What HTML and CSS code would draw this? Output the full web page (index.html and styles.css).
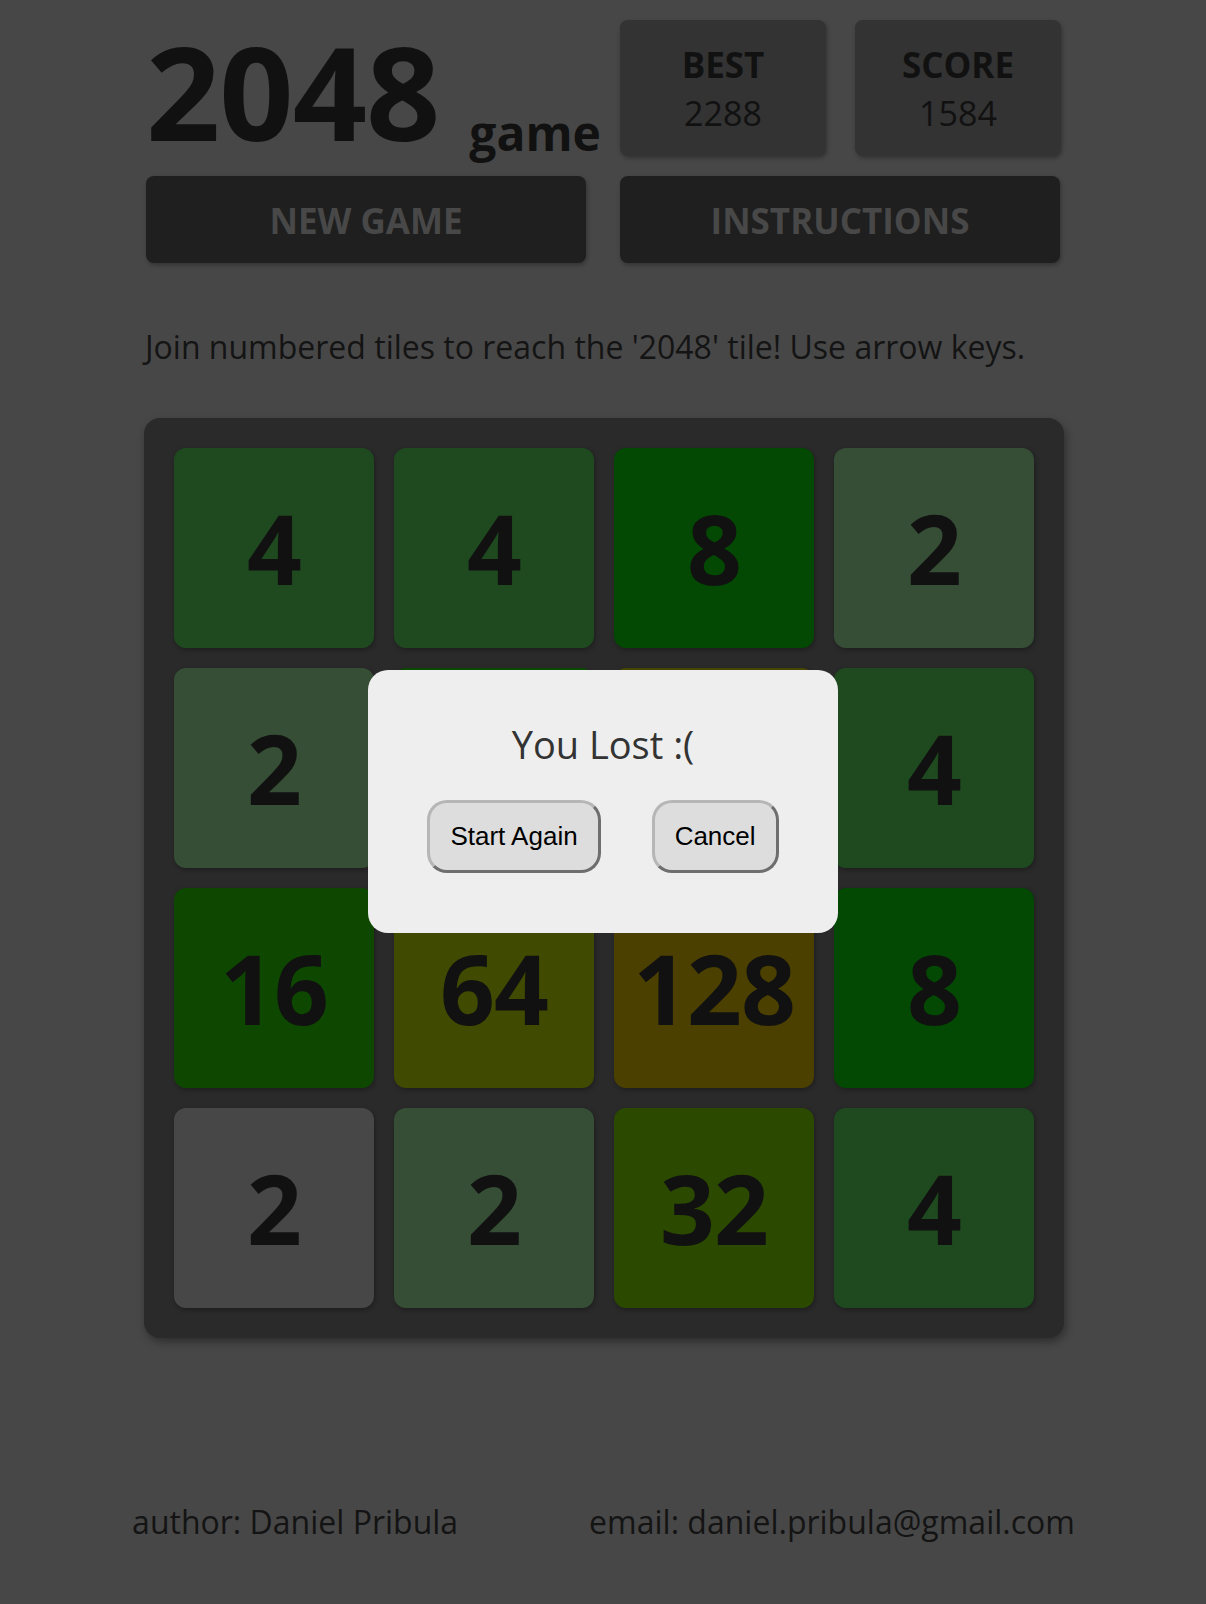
FILE: index.html
```html
<!DOCTYPE html>
<html lang="en">
<head>
<meta charset="utf-8">
<title>2048 game</title>
<link rel="stylesheet" href="styles.css">
</head>
<body>
<div class="page">
  <header class="header">
    <div class="title-row">
      <h1 class="title"><span class="title-main">2048</span><span class="title-sub">game</span></h1>
      <div class="scores">
        <div class="score-box"><div class="score-label">BEST</div><div class="score-value">2288</div></div>
        <div class="score-box"><div class="score-label">SCORE</div><div class="score-value">1584</div></div>
      </div>
    </div>
    <div class="actions">
      <button class="action">NEW GAME</button>
      <button class="action">INSTRUCTIONS</button>
    </div>
  </header>

  <p class="intro">Join numbered tiles to reach the '2048' tile! Use arrow keys.</p>

  <div class="board">
    <div class="tile t4">4</div>
    <div class="tile t4">4</div>
    <div class="tile t8">8</div>
    <div class="tile t2">2</div>

    <div class="tile t2">2</div>
    <div class="tile t8b"></div>
    <div class="tile t256"></div>
    <div class="tile t4">4</div>

    <div class="tile t16">16</div>
    <div class="tile t64">64</div>
    <div class="tile t128">128</div>
    <div class="tile t8">8</div>

    <div class="tile tnew">2</div>
    <div class="tile t2">2</div>
    <div class="tile t32">32</div>
    <div class="tile t4">4</div>
  </div>

  <footer class="footer">
    <span>author: Daniel Pribula</span>
    <span>email: daniel.pribula@gmail.com</span>
  </footer>
</div>

<div class="modal">
  <div class="modal-title">You Lost :(</div>
  <div class="modal-buttons">
    <button class="modal-btn">Start Again</button>
    <button class="modal-btn">Cancel</button>
  </div>
</div>
</body>
</html>
```

FILE: styles.css
```css
html, body {
  margin: 0;
  padding: 0;
}
body {
  background: #474747;
  font-family: "Open Sans", "DejaVu Sans", sans-serif;
  color: #141414;
  min-height: 1604px;
}
.page {
  width: 920px;
  margin: 0 auto;
}
.header {
  padding: 20px 2px 0 3px;
}
.title-row {
  display: flex;
  gap: 34px;
  align-items: flex-end;
}
.title {
  margin: 0;
  width: 440px;
  display: flex;
  align-items: flex-end;
  font-weight: 700;
  color: #111;
  line-height: 1;
}
.title-main {
  font-size: 130px;
  letter-spacing: -1px;
}
.title-sub {
  font-size: 48px;
  margin-left: 30px;
  position: relative;
  top: 1px;
}
.scores {
  display: flex;
  gap: 29px;
  width: 442px;
}
.score-box {
  flex: 1;
  height: 136px;
  box-sizing: border-box;
  padding-top: 21px;
  background: #333;
  border-radius: 8px;
  box-shadow: 1px 2px 4px rgba(0,0,0,0.3);
  text-align: center;
  color: #111;
}
.score-label {
  font-size: 35px;
  font-weight: 700;
}
.score-value {
  font-size: 34px;
  line-height: 1.3;
  margin-top: 3px;
}
.actions {
  display: flex;
  gap: 34px;
  margin-top: 20px;
}
.action {
  width: 440px;
  height: 87px;
  border: none;
  border-radius: 8px;
  background: #1f1f1f;
  color: #484848;
  font-family: "Open Sans", "DejaVu Sans", sans-serif;
  font-weight: 700;
  font-size: 35px;
  box-shadow: 1px 2px 4px rgba(0,0,0,0.3);
  padding: 2px 0 0;
}
.intro {
  margin: 62px 0 0 2px;
  font-size: 32px;
  line-height: 43.6px;
}
.board {
  margin-top: 49px;
  margin-left: 1px;
  width: 920px;
  height: 920px;
  box-sizing: border-box;
  padding: 30px;
  background: #2a2a2a;
  border-radius: 16px;
  box-shadow: 2px 4px 8px rgba(0,0,0,0.35);
  display: grid;
  grid-template-columns: repeat(4, 200px);
  grid-template-rows: repeat(4, 200px);
  gap: 20px;
}
.tile {
  border-radius: 12px;
  display: flex;
  align-items: center;
  justify-content: center;
  font-size: 96px;
  font-weight: 700;
  color: #111;
  box-shadow: 1px 2px 5px rgba(0,0,0,0.3);
  letter-spacing: -1px;
}
.t2 { background: #354e35; }
.t4 { background: #1f4a1f; }
.t8 { background: #034903; }
.t8b { background: #0a4a03; }
.t16 { background: #0e4800; }
.t32 { background: #2b4a00; }
.t64 { background: #404a00; }
.t128 { background: #4b4000; }
.t256 { background: #484700; }
.tnew { background: #474747; }

.footer {
  margin-top: 162px;
  padding-left: 1px;
  display: flex;
  justify-content: center;
  gap: 131px;
  font-size: 32px;
  line-height: 43.6px;
  white-space: nowrap;
}

.modal {
  position: fixed;
  left: 368px;
  top: 670px;
  width: 470px;
  height: 263px;
  box-sizing: border-box;
  padding-top: 47px;
  background: #eee;
  border-radius: 20px;
  text-align: center;
}
.modal-title {
  font-size: 38px;
  color: #333;
  line-height: 54px;
}
.modal-buttons {
  margin-top: 29px;
  display: flex;
  justify-content: center;
  gap: 51px;
}
.modal-btn {
  height: 73px;
  box-sizing: border-box;
  padding: 0 20px;
  font-family: "Liberation Sans", Arial, sans-serif;
  font-size: 26px;
  color: #000;
  background: #ddd;
  border: 3px solid;
  border-color: #b6b6b6 #6e6e6e #6e6e6e #b6b6b6;
  border-radius: 20px;
}
```
